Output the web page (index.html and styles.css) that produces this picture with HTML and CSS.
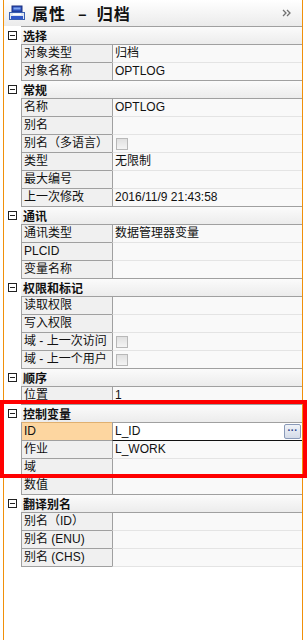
FILE: index.html
```html
<!DOCTYPE html>
<html lang="zh-CN">
<head>
    <meta charset="UTF-8">
    <meta name="viewport" content="width=device-width, initial-scale=1.0">
    <title>属性 - 归档</title>
    <link rel="stylesheet" href="styles.css">
</head>
<body>
    <div id="panel">
        <div class="titlebar">
            <svg class="title-icon" width="16" height="16" viewBox="0 0 16 16">
                <rect x="3" y="1" width="10" height="6" fill="#2a4fb8" stroke="#1a2f80"/>
                <rect x="4.5" y="2.5" width="7" height="2" fill="#7fa4f0"/>
                <rect x="0.5" y="7.5" width="15" height="7" fill="#dfe6f2" stroke="#3a5fb0"/>
                <rect x="2" y="11" width="12" height="3" fill="#3158c8"/>
                <rect x="4" y="8.5" width="8" height="1.5" fill="#ffffff"/>
            </svg>
            <span class="title-text">属性<span class="dash">–</span>归档</span>
            <svg class="title-more" width="10" height="8" viewBox="0 0 10 8">
                <path d="M1 1 L4 4 L1 7 M5 1 L8 4 L5 7" fill="none" stroke="#707070" stroke-width="1.3"/>
            </svg>
        </div>

        <div class="section"><span class="toggle"></span><span class="sec-name">选择</span></div>
        <div class="row"><span class="gutter"></span><span class="label">对象类型</span><span class="value">归档</span></div>
        <div class="row"><span class="gutter"></span><span class="label">对象名称</span><span class="value">OPTLOG</span></div>

        <div class="section"><span class="toggle"></span><span class="sec-name">常规</span></div>
        <div class="row"><span class="gutter"></span><span class="label">名称</span><span class="value">OPTLOG</span></div>
        <div class="row"><span class="gutter"></span><span class="label">别名</span><span class="value"></span></div>
        <div class="row"><span class="gutter"></span><span class="label">别名（多语言）</span><span class="value"><span class="check"></span></span></div>
        <div class="row"><span class="gutter"></span><span class="label">类型</span><span class="value">无限制</span></div>
        <div class="row"><span class="gutter"></span><span class="label">最大编号</span><span class="value"></span></div>
        <div class="row"><span class="gutter"></span><span class="label">上一次修改</span><span class="value">2016/11/9 21:43:58</span></div>

        <div class="section"><span class="toggle"></span><span class="sec-name">通讯</span></div>
        <div class="row"><span class="gutter"></span><span class="label">通讯类型</span><span class="value">数据管理器变量</span></div>
        <div class="row"><span class="gutter"></span><span class="label">PLCID</span><span class="value"></span></div>
        <div class="row"><span class="gutter"></span><span class="label">变量名称</span><span class="value"></span></div>

        <div class="section"><span class="toggle"></span><span class="sec-name">权限和标记</span></div>
        <div class="row"><span class="gutter"></span><span class="label">读取权限</span><span class="value"></span></div>
        <div class="row"><span class="gutter"></span><span class="label">写入权限</span><span class="value"></span></div>
        <div class="row"><span class="gutter"></span><span class="label">域 - 上一次访问</span><span class="value"><span class="check"></span></span></div>
        <div class="row"><span class="gutter"></span><span class="label">域 - 上一个用户</span><span class="value"><span class="check"></span></span></div>

        <div class="section"><span class="toggle"></span><span class="sec-name">顺序</span></div>
        <div class="row"><span class="gutter"></span><span class="label">位置</span><span class="value">1</span></div>

        <div class="section"><span class="toggle"></span><span class="sec-name">控制变量</span></div>
        <div class="row selected"><span class="gutter"></span><span class="label">ID</span><span class="value">L_ID<span class="more-btn">···</span></span></div>
        <div class="row after-selected"><span class="gutter"></span><span class="label">作业</span><span class="value">L_WORK</span></div>
        <div class="row"><span class="gutter"></span><span class="label">域</span><span class="value"></span></div>
        <div class="row"><span class="gutter"></span><span class="label">数值</span><span class="value"></span></div>

        <div class="section"><span class="toggle"></span><span class="sec-name">翻译别名</span></div>
        <div class="row"><span class="gutter"></span><span class="label">别名（ID）</span><span class="value"></span></div>
        <div class="row"><span class="gutter"></span><span class="label">别名 (ENU)</span><span class="value"></span></div>
        <div class="row last"><span class="gutter"></span><span class="label">别名 (CHS)</span><span class="value"></span></div>

        <div class="highlight"></div>
    </div>
</body>
</html>
```

FILE: styles.css
```css
body {
    margin: 0;
    padding: 0;
    background-color: #ffffff;
    font-family: "Liberation Sans", "Noto Sans CJK SC", sans-serif;
    font-size: 12px;
    color: #111;
}
#panel {
    position: relative;
    margin-left: 3px;
    width: 298px;
    height: 640px;
    border-left: 1px solid #f0900a;
    border-right: 1px solid #f0900a;
    background-color: #fff;
}
.titlebar {
    display: flex;
    align-items: center;
    height: 26px;
    padding-left: 5px;
    box-sizing: border-box;
    background: linear-gradient(#ffffff, #ebebeb);
}
.title-icon {
    margin-right: 7px;
}
.title-text {
    flex: 1;
    font-family: "Noto Sans CJK SC", sans-serif;
    font-size: 16px;
    font-weight: bold;
    letter-spacing: 1px;
    color: #111;
}
.dash {
    margin: 0 9px 0 12px;
}
.title-more {
    margin-right: 10px;
}
.section, .row {
    display: flex;
    height: 18px;
    line-height: 17px;
}
.section {
    padding-left: 17px;
    position: relative;
}
.sec-name {
    flex: 1;
    padding-left: 2px;
    border-top: 1px solid #a0a0a0;
    background: linear-gradient(#fbfbfb, #ececec);
    font-family: "Noto Sans CJK SC", sans-serif;
    font-weight: bold;
    font-size: 12px;
}
.toggle {
    position: absolute;
    left: 4px;
    top: 5px;
    width: 7px;
    height: 7px;
    border: 1px solid #222;
}
.toggle::after {
    content: "";
    position: absolute;
    left: 1px;
    top: 3px;
    width: 5px;
    height: 1px;
    background-color: #222;
}
.gutter {
    width: 17px;
}
.label {
    width: 88px;
    padding-left: 2px;
    border-left: 1px solid #a0a0a0;
    border-top: 1px solid #a0a0a0;
    background-color: #f0f0f0;
    white-space: nowrap;
    overflow: hidden;
}
.value {
    position: relative;
    flex: 1;
    padding-left: 2px;
    border-left: 1px solid #a0a0a0;
    border-top: 1px solid #e4e4e4;
    background-color: #f9f9f9;
    white-space: nowrap;
}
.section + .row .value {
    border-top-color: #a0a0a0;
}
.last {
    height: 19px;
}
.last .label {
    border-bottom: 1px solid #a0a0a0;
}
.last .value {
    border-bottom: 1px solid #e4e4e4;
}
.check {
    display: inline-block;
    width: 10px;
    height: 10px;
    margin-top: 3px;
    margin-left: 1px;
    vertical-align: top;
    border: 1px solid #b8b8b8;
    background: linear-gradient(#e0e0e0, #f4f4f4);
}
.selected .label {
    background-color: #fdd6a0;
    border-top-color: #e0b070;
}
.selected .value {
    background-color: #fff;
    border-top: 1px solid #111;
}
.after-selected .value {
    border-top: 1px solid #111;
}
.more-btn {
    position: absolute;
    right: 1px;
    top: 1px;
    width: 15px;
    height: 13px;
    line-height: 11px;
    text-align: center;
    font-size: 10px;
    font-weight: bold;
    color: #2a3e8a;
    border: 1px solid #8a9ab8;
    border-radius: 2px;
    background: linear-gradient(#f0f3f8, #d4dbe8);
}
.highlight {
    position: absolute;
    left: -4px;
    top: 400px;
    width: 299px;
    height: 70px;
    border: 4px solid #ff0000;
}
```
